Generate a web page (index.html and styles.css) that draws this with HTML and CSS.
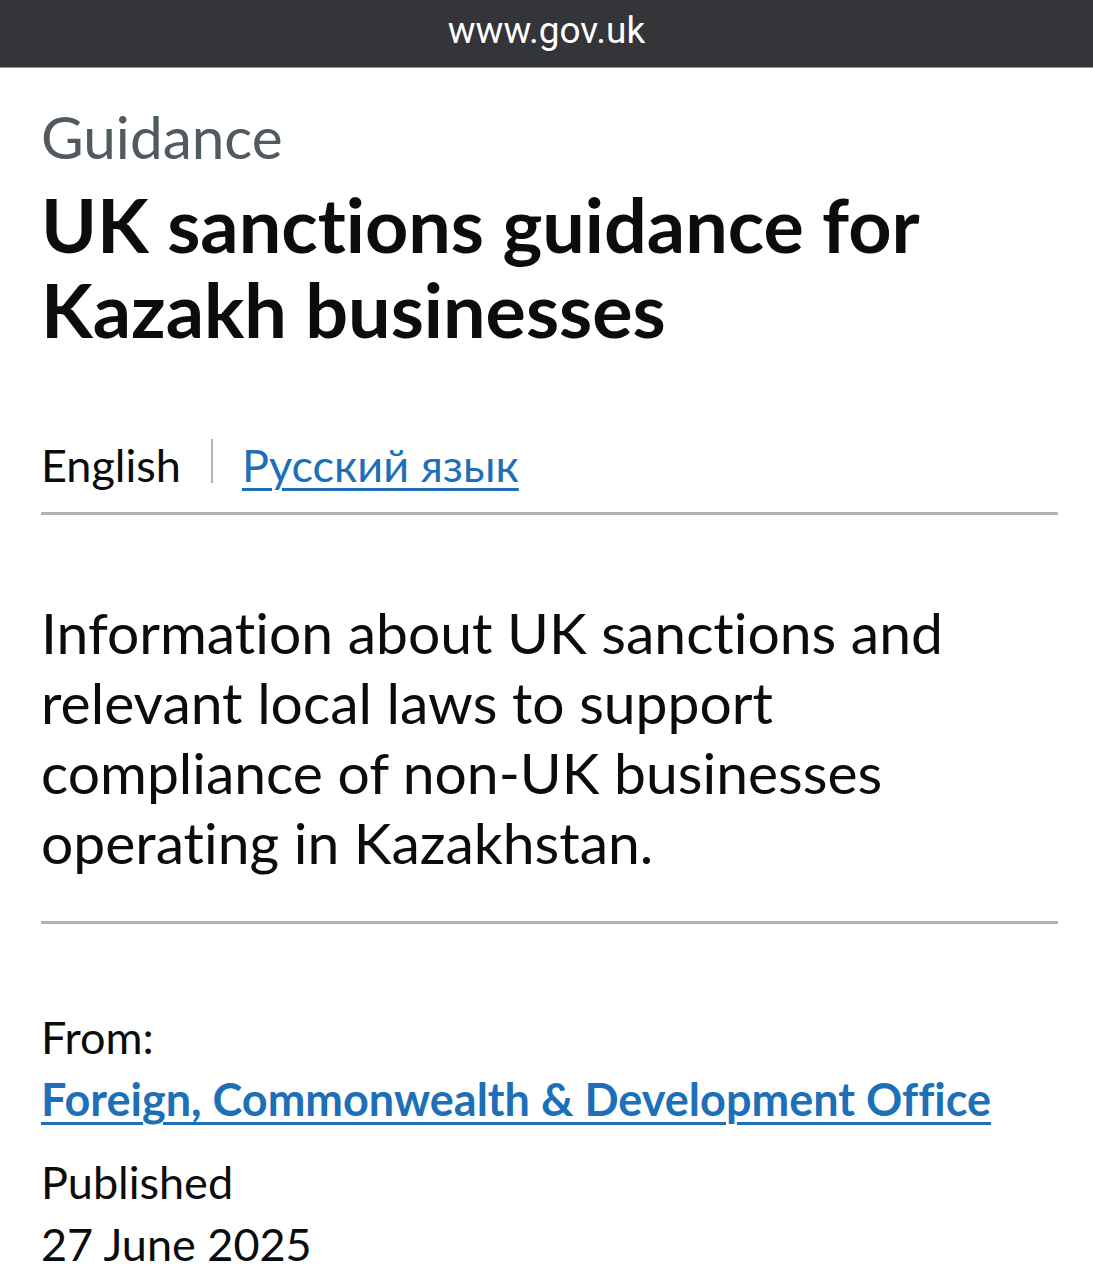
FILE: index.html
```html
<!DOCTYPE html>
<html lang="en">
<head>
<meta charset="utf-8">
<title>UK sanctions guidance for Kazakh businesses - GOV.UK</title>
<link rel="stylesheet" href="styles.css">
</head>
<body>
<div class="url-bar">www.gov.uk</div>
<main class="page">
  <header class="title-block">
    <span class="caption">Guidance</span>
    <h1 class="heading">UK sanctions guidance for Kazakh businesses</h1>
  </header>
  <nav class="translations">
    <span class="lang current">English</span>
    <span class="lang-sep"></span>
    <a class="lang link" href="#" lang="ru">Русский язык</a>
  </nav>
  <p class="lead">Information about UK sanctions and relevant local laws to support compliance of non-UK businesses operating in Kazakhstan.</p>
  <dl class="metadata">
    <dt class="meta-term">From:</dt>
    <dd class="meta-def meta-from"><a class="link org" href="#">Foreign, Commonwealth &amp; Development Office</a></dd>
    <dt class="meta-term">Published</dt>
    <dd class="meta-def">27 June 2025</dd>
  </dl>
</main>
</body>
</html>
```
FILE: styles.css
```css
html, body {
  margin: 0;
  padding: 0;
  background: #ffffff;
}

body {
  font-family: "Lato", "Noto Sans", sans-serif;
  font-variant-ligatures: none;
  color: #0b0c0c;
}

/* browser address strip */
.url-bar {
  height: 67px;
  background: #333538;
  border-bottom: 1px solid #8e8f90;
  color: #ffffff;
  font-family: "Roboto", sans-serif;
  font-size: 37px;
  line-height: 62px;
  text-align: center;
}

.page {
  padding: 0 35px 0 41px;
}

.title-block {
  padding-top: 33px;
}

.caption {
  display: block;
  color: #505a5f;
  font-size: 58.5px;
  line-height: 70px;
}

.heading {
  margin: 10px 0 0;
  font-size: 75.5px;
  font-weight: 700;
  line-height: 85px;
}

/* language switcher */
.translations {
  display: flex;
  align-items: flex-start;
  margin-top: 84px;
  padding-bottom: 17px;
  border-bottom: 3px solid #b1b4b6;
  font-size: 45px;
  line-height: 60px;
}

.lang-sep {
  width: 2px;
  height: 44px;
  margin: 4px 29px 0 30px;
  background: #b1b4b6;
}

.link {
  color: #1d70b8;
  text-decoration: underline;
  text-decoration-thickness: 3px;
  text-underline-offset: 6px;
}

.lead {
  margin: 0;
  padding: 82px 0 44px;
  border-bottom: 3px solid #b1b4b6;
  font-size: 57px;
  line-height: 70px;
}

/* document metadata */
.metadata {
  margin: 82px 0 0;
  font-size: 45px;
  line-height: 62px;
}

.meta-term,
.meta-def {
  margin: 0;
}

.meta-from {
  margin-bottom: 21px;
}

.org {
  font-weight: 700;
}
```
